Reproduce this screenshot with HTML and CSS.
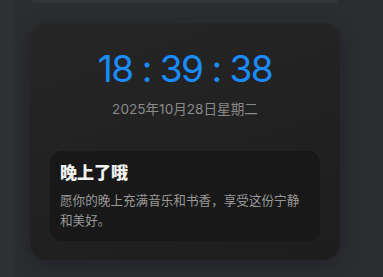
FILE: index.html
```html
<!DOCTYPE html>
<html lang="zh-CN">
  <head>
    <meta charset="UTF-8" />
    <meta name="viewport" content="width=device-width, initial-scale=1.0" />
    <title>时钟</title>
    <link rel="stylesheet" href="styles.css">
  </head>
  <body>
    <div class="sidebar"></div>
    <div class="main">
      <div class="card-top"></div>

      <div class="clock-card">
        <div class="clock">18 : 39 : 38</div>
        <div class="date">2025年10月28日星期二</div>

        <div class="greeting">
          <h2>晚上了哦</h2>
          <p>愿你的晚上充满音乐和书香，享受这份宁静和美好。</p>
        </div>
      </div>
    </div>
  </body>
</html>
```

FILE: styles.css
```css
body {
  font-family: Inter, "Noto Sans CJK SC", sans-serif;
  margin: 0;
  padding: 0;
  display: flex;
  height: 100vh;
  overflow: hidden;
  background-color: #2b2d31;
}

.sidebar {
  width: 15px;
  flex-shrink: 0;
  background-color: #2f3135;
}

.main {
  flex: 1;
  padding: 0 43px 0 15px;
  display: flex;
  flex-direction: column;
  gap: 20px;
}

.card-top {
  height: 3px;
  margin: 0 2px;
  background-color: #343539;
  border-radius: 0 0 6px 6px;
}

.clock-card {
  padding: 23px 20px 19px;
  background: linear-gradient(160deg, #262626, #1d1d1d);
  border-radius: 16px;
  box-shadow: 0 4px 20px rgba(0, 0, 0, 0.25);
  text-align: center;
}

.clock {
  font-size: 37px;
  line-height: 46px;
  font-weight: 400;
  letter-spacing: -1.5px;
  color: #1a8cff;
}

.date {
  margin-top: 7px;
  font-size: 13.6px;
  line-height: 21px;
  color: #8a8a8a;
}

.greeting {
  margin-top: 31px;
  padding: 12px 10px 10px;
  background-color: #181818;
  border-radius: 12px;
  text-align: left;
}

.greeting h2 {
  margin: 0;
  font-size: 17px;
  line-height: 20px;
  font-weight: 900;
  color: #f2f2f2;
}

.greeting p {
  margin: 8px 0 0;
  font-size: 12.6px;
  line-height: 20px;
  color: #9a9a9a;
}
```
